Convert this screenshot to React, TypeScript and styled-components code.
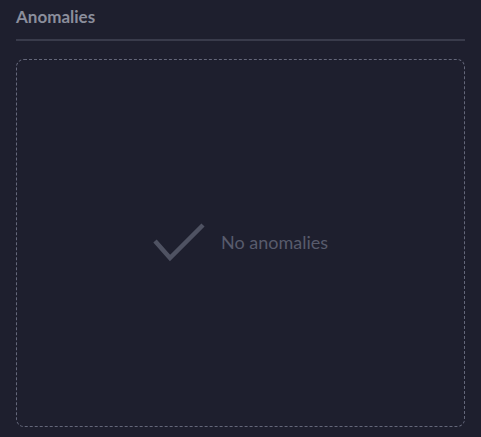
import React from 'react';
import styled, { createGlobalStyle } from 'styled-components';

const GlobalStyle = createGlobalStyle`
	html, body {
		margin: 0;
		padding: 0;
		background: #1e1f2e;
	}
	body {
		font-family: Lato, 'Liberation Sans', sans-serif;
	}
`;

const Panel = styled.div`
	display: flex;
	flex-direction: column;
	height: 437px;
	box-sizing: border-box;
	padding: 6px 16px 10px;
`;
const Header = styled.div`
	font-size: 17px;
	font-weight: 700;
	color: #8b8e9c;
	line-height: 21px;
	padding-bottom: 12px;
	border-bottom: 2px solid #393b4b;
`;
const EmptyBox = styled.div`
	flex: 1;
	margin-top: 18px;
	border: 1px dashed #64677a;
	border-radius: 8px;
	display: flex;
	align-items: center;
	justify-content: center;
	gap: 14px;
`;
const Message = styled.span`
	font-size: 18px;
	color: #585b6c;
	margin-bottom: 2px;
`;

const CheckIcon = () => (
	<svg width="54" height="42" viewBox="0 0 54 42" fill="none">
		<path d="M2 19 L17 36 L50 3" stroke="#4f5262" strokeWidth="4.5" />
	</svg>
);

const App = () => (
	<>
		<GlobalStyle />
		<Panel>
			<Header>Anomalies</Header>
			<EmptyBox>
				<CheckIcon />
				<Message>No anomalies</Message>
			</EmptyBox>
		</Panel>
	</>
);

export default App;
